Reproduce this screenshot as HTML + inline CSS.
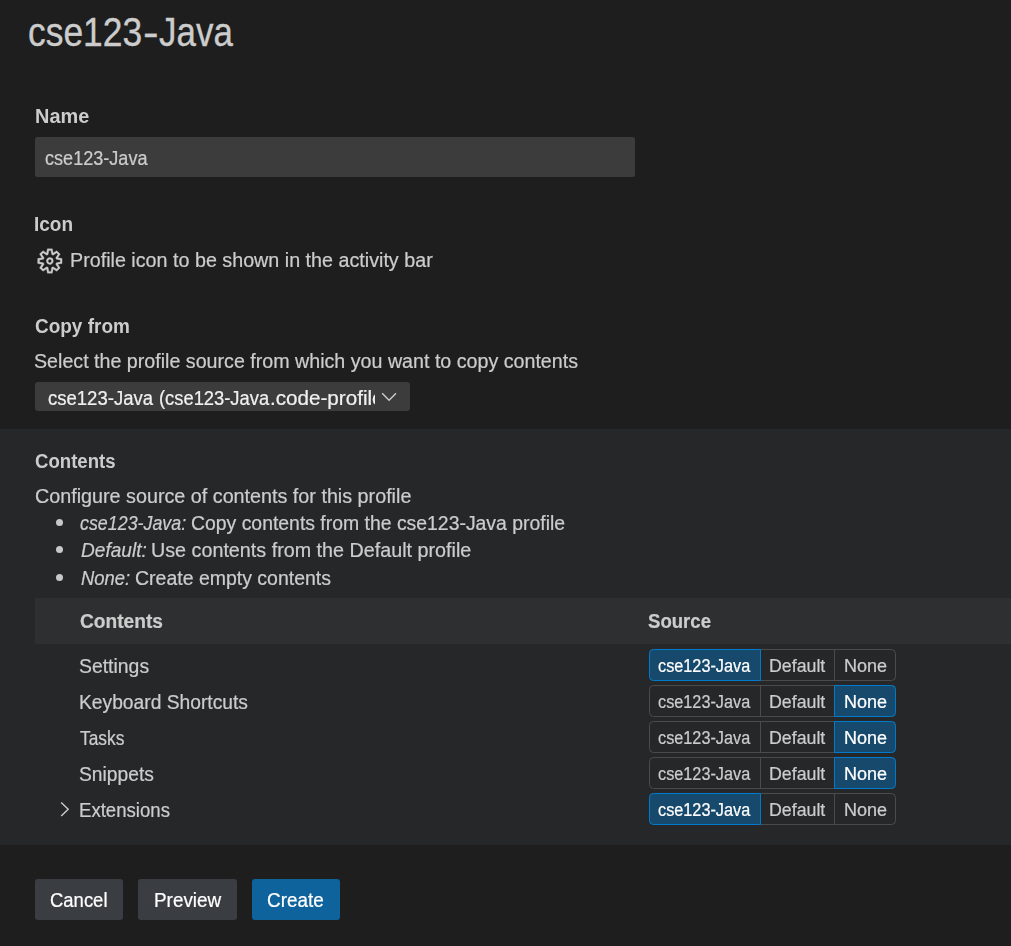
<!DOCTYPE html><html lang="en"><head><meta charset="utf-8"><title>cse123-Java</title><style>
html,body{margin:0;padding:0;background:#1e1e1e;}
body{width:1011px;height:946px;position:relative;overflow:hidden;font-family:"Liberation Sans",sans-serif;color:#cccccc;}
.b{position:absolute;}
.t{position:absolute;margin:0;white-space:nowrap;display:block;-webkit-text-stroke:0.22px currentColor;}
.s{display:inline-block;transform-origin:0 0;}
.t i{font-style:italic;}
#title{-webkit-text-stroke:0.35px currentColor;}
#lname,#licon,#lcopy,#lcont{-webkit-text-stroke:0;}
.st{display:inline-block;width:0;height:0;}
.g{position:absolute;left:0;top:0;width:1011px;height:946px;will-change:transform;}
.rg{position:absolute;left:649px;width:247px;height:32px;box-sizing:border-box;border:1px solid #4b4b4c;border-radius:4.5px;}
.rg .d{position:absolute;top:0;width:1px;height:30px;background:#4b4b4c;}
.rg .a{position:absolute;top:-1px;height:32px;box-sizing:border-box;background:#16496c;border:1px solid #007acc;}
</style></head><body>
<div class="b" style="left:35px;top:137px;width:600px;height:40px;background:#3c3c3c;border-radius:2.5px"></div>
<div class="b" style="left:35px;top:382px;width:375px;height:29px;background:#3c3c3c;border-radius:3px"></div>
<div class="b" style="left:0;top:429px;width:1011px;height:416px;background:#262729"></div>
<div class="b" style="left:35px;top:598px;width:976px;height:46px;background:#2e2f31"></div>
<div class="b" style="left:55.80px;top:518.70px;width:7.4px;height:7.4px;border-radius:50%;background:#c8c8c8"></div>
<div class="b" style="left:55.80px;top:545.80px;width:7.4px;height:7.4px;border-radius:50%;background:#c8c8c8"></div>
<div class="b" style="left:55.80px;top:573.70px;width:7.4px;height:7.4px;border-radius:50%;background:#c8c8c8"></div>
<div class="rg" style="top:649px">
<div class="d" style="left:110px"></div><div class="d" style="left:184px"></div>
<div class="a" style="left:-1px;width:112px;border-radius:4.5px 0 0 4.5px"></div>
</div>
<div class="rg" style="top:685px">
<div class="d" style="left:110px"></div><div class="d" style="left:184px"></div>
<div class="a" style="left:184px;width:62px;border-radius:0 4.5px 4.5px 0"></div>
</div>
<div class="rg" style="top:721px">
<div class="d" style="left:110px"></div><div class="d" style="left:184px"></div>
<div class="a" style="left:184px;width:62px;border-radius:0 4.5px 4.5px 0"></div>
</div>
<div class="rg" style="top:757px">
<div class="d" style="left:110px"></div><div class="d" style="left:184px"></div>
<div class="a" style="left:184px;width:62px;border-radius:0 4.5px 4.5px 0"></div>
</div>
<div class="rg" style="top:793px">
<div class="d" style="left:110px"></div><div class="d" style="left:184px"></div>
<div class="a" style="left:-1px;width:112px;border-radius:4.5px 0 0 4.5px"></div>
</div>
<div class="b" style="left:35px;top:879px;width:88px;height:41px;background:#3a3d41;border-radius:3px"></div>
<div class="b" style="left:138px;top:879px;width:99px;height:41px;background:#3a3d41;border-radius:3px"></div>
<div class="b" style="left:252px;top:879px;width:88px;height:41px;background:#0e639c;border-radius:3px"></div>
<svg class="b" style="left:0;top:0" width="1011" height="946" viewBox="0 0 1011 946">
<g transform="translate(37.65 248.80) scale(1.0167)"><path fill="#cccccc" stroke="#cccccc" stroke-width="0.3" fill-rule="evenodd" d="M19.85 8.75l4.15.83v4.84l-4.15.83 2.35 3.52-3.43 3.43-3.52-2.35-.83 4.15H9.58l-.83-4.15-3.52 2.35-3.43-3.43 2.35-3.52L0 14.42V9.58l4.15-.83L1.8 5.23 5.23 1.8l3.52 2.35L9.58 0h4.84l.83 4.15 3.52-2.35 3.43 3.43-2.35 3.52zm-1.57 5.07l4-.81v-2l-4-.81-.54-1.3 2.29-3.43-1.43-1.43-3.43 2.29-1.3-.54-.81-4h-2l-.81 4-1.3.54-3.43-2.29-1.43 1.43L6.38 8.9l-.54 1.3-4 .81v2l4 .81.54 1.3-2.29 3.43 1.43 1.43 3.43-2.29 1.3.54.81 4h2l.81-4 1.3-.54 3.43 2.29 1.43-1.43-2.29-3.43.54-1.3zm-8.186-4.672A3.43 3.43 0 0 1 12 8.57 3.44 3.44 0 0 1 15.43 12a3.43 3.43 0 1 1-5.336-2.852zm.956 4.274c.281.188.612.288.95.288A1.7 1.7 0 0 0 13.71 12a1.71 1.71 0 1 0-2.66 1.422z"/></g>
<path d="M382.2 393.3 L389.1 400.3 L396.0 393.3" fill="none" stroke="#cccccc" stroke-width="1.4"/>
<path d="M61.2 802.4 L68.2 809.2 L61.2 816" fill="none" stroke="#cccccc" stroke-width="1.4"/>
</svg>
<h1 class="t" id="title" style="left:28.00px;top:10.00px;font-size:40.20px;line-height:45px;font-weight:400;color:#cccccc"><span class="s" id="title_s0" style="transform:scaleX(0.8811)">cse123</span><span class="s" id="title_s1" style="transform:scaleX(1.1686);margin-left:-14.61px">-</span><span class="s" id="title_s2" style="transform:scaleX(0.8695);margin-left:2.61px">Java</span></h1>
<div class="g">
<span class="t" id="lname" style="left:35.00px;top:105.00px;font-size:19.50px;line-height:22px;font-weight:700;color:#cccccc"><span class="s" id="lname_s0" style="transform:scaleX(1.0217)">Name</span></span>
<span class="t" id="inp" style="left:45.00px;top:147.00px;font-size:19.60px;line-height:22px;font-weight:400;color:#cccccc"><span class="s" id="inp_s0" style="transform:scaleX(0.9229)">cse123-Java</span></span>
<span class="t" id="licon" style="left:34.00px;top:213.00px;font-size:19.50px;line-height:22px;font-weight:700;color:#cccccc"><span class="s" id="licon_s0" style="transform:scaleX(0.9736)">Icon</span></span>
<span class="t" id="picon" style="left:70.00px;top:249.00px;font-size:19.60px;line-height:22px;font-weight:400;color:#cccccc"><span class="s" id="picon_s0" style="transform:scaleX(1.0061)">Profile icon to be shown in the activity bar</span></span>
<span class="t" id="lcopy" style="left:35.00px;top:315.00px;font-size:19.50px;line-height:22px;font-weight:700;color:#cccccc"><span class="s" id="lcopy_s0" style="transform:scaleX(0.9727)">Copy from</span></span>
<span class="t" id="selp" style="left:34.00px;top:350.00px;font-size:19.60px;line-height:22px;font-weight:400;color:#cccccc"><span class="s" id="selp_s0" style="transform:scaleX(1.0030)">Select the profile source from which you want to copy contents</span></span>
<div class="b" style="left:35px;top:382px;width:340px;height:29px;overflow:hidden"><span class="t" id="selt" style="left:13.00px;top:5.00px;font-size:19.60px;line-height:22px;font-weight:400;color:#f0f0f0"><span class="s" id="selt_s0" style="transform:scaleX(0.9453)">cse123-Java</span> <span class="s" id="selt_s1" style="transform:scaleX(0.9362);margin-left:-5.58px">(cse123-Java</span><span class="s" id="selt_s2" style="transform:scaleX(1.0533);margin-left:-6.43px">.code-profile)</span></span></div>
<span class="t" id="lcont" style="left:35.00px;top:450.00px;font-size:19.50px;line-height:22px;font-weight:700;color:#cccccc"><span class="s" id="lcont_s0" style="transform:scaleX(0.9533)">Contents</span></span>
<span class="t" id="conf" style="left:35.00px;top:484.70px;font-size:19.60px;line-height:22px;font-weight:400;color:#cccccc"><span class="s" id="conf_s0" style="transform:scaleX(1.0075)">Configure source of contents for this profile</span></span>
<span class="t" id="li1" style="left:80.00px;top:511.60px;font-size:19.60px;line-height:22px;font-weight:400;color:#cccccc"><span class="s" id="li1_s0" style="transform:scaleX(0.9110)"><i>cse123-Java:</i></span> <span class="s" id="li1_s1" style="transform:scaleX(0.9898);margin-left:-11.00px">Copy contents from the cse123-Java profile</span></span>
<span class="t" id="li2" style="left:81.00px;top:539.00px;font-size:19.60px;line-height:22px;font-weight:400;color:#cccccc"><span class="s" id="li2_s0" style="transform:scaleX(0.9738)"><i>Default:</i></span> <span class="s" id="li2_s1" style="transform:scaleX(1.0071);margin-left:-3.00px">Use contents from the Default profile</span></span>
<span class="t" id="li3" style="left:81.00px;top:566.70px;font-size:19.60px;line-height:22px;font-weight:400;color:#cccccc"><span class="s" id="li3_s0" style="transform:scaleX(0.9403)"><i>None:</i></span> <span class="s" id="li3_s1" style="transform:scaleX(0.9944);margin-left:-3.75px">Create empty contents</span></span>
<span class="t" id="hcont" style="left:80.00px;top:610.00px;font-size:19.50px;line-height:22px;font-weight:700;color:#cccccc"><span class="s" id="hcont_s0" style="transform:scaleX(0.9822)">Contents</span></span>
<span class="t" id="hsrc" style="left:648.00px;top:610.00px;font-size:19.50px;line-height:22px;font-weight:700;color:#cccccc"><span class="s" id="hsrc_s0" style="transform:scaleX(0.9525)">Source</span></span>
<span class="t" id="r0" style="left:79.00px;top:655.00px;font-size:19.60px;line-height:22px;font-weight:400;color:#cccccc"><span class="s" id="r0_s0" style="transform:scaleX(0.9903)">Settings</span></span>
<span class="t" id="r0_0" style="left:658.00px;top:656.00px;font-size:17.50px;line-height:20px;font-weight:400;color:#ffffff"><span class="s" id="r0_0_s0" style="transform:scaleX(0.9293)">cse123-Java</span></span>
<span class="t" id="r0_1" style="left:769.00px;top:656.00px;font-size:17.50px;line-height:20px;font-weight:400;color:#cccccc"><span class="s" id="r0_1_s0" style="transform:scaleX(1.0155)">Default</span></span>
<span class="t" id="r0_2" style="left:844.00px;top:656.00px;font-size:17.50px;line-height:20px;font-weight:400;color:#cccccc"><span class="s" id="r0_2_s0" style="transform:scaleX(1.0307)">None</span></span>
<span class="t" id="r1" style="left:79.00px;top:691.00px;font-size:19.60px;line-height:22px;font-weight:400;color:#cccccc"><span class="s" id="r1_s0" style="transform:scaleX(0.9819)">Keyboard Shortcuts</span></span>
<span class="t" id="r1_0" style="left:658.00px;top:692.00px;font-size:17.50px;line-height:20px;font-weight:400;color:#cccccc"><span class="s" id="r1_0_s0" style="transform:scaleX(0.9293)">cse123-Java</span></span>
<span class="t" id="r1_1" style="left:769.00px;top:692.00px;font-size:17.50px;line-height:20px;font-weight:400;color:#cccccc"><span class="s" id="r1_1_s0" style="transform:scaleX(1.0155)">Default</span></span>
<span class="t" id="r1_2" style="left:844.00px;top:692.00px;font-size:17.50px;line-height:20px;font-weight:400;color:#ffffff"><span class="s" id="r1_2_s0" style="transform:scaleX(1.0288)">None</span></span>
<span class="t" id="r2" style="left:80.00px;top:727.00px;font-size:19.60px;line-height:22px;font-weight:400;color:#cccccc"><span class="s" id="r2_s0" style="transform:scaleX(0.8857)">Tasks</span></span>
<span class="t" id="r2_0" style="left:658.00px;top:728.00px;font-size:17.50px;line-height:20px;font-weight:400;color:#cccccc"><span class="s" id="r2_0_s0" style="transform:scaleX(0.9293)">cse123-Java</span></span>
<span class="t" id="r2_1" style="left:769.00px;top:728.00px;font-size:17.50px;line-height:20px;font-weight:400;color:#cccccc"><span class="s" id="r2_1_s0" style="transform:scaleX(1.0155)">Default</span></span>
<span class="t" id="r2_2" style="left:844.00px;top:728.00px;font-size:17.50px;line-height:20px;font-weight:400;color:#ffffff"><span class="s" id="r2_2_s0" style="transform:scaleX(1.0288)">None</span></span>
<span class="t" id="r3" style="left:79.00px;top:763.00px;font-size:19.60px;line-height:22px;font-weight:400;color:#cccccc"><span class="s" id="r3_s0" style="transform:scaleX(0.9818)">Snippets</span></span>
<span class="t" id="r3_0" style="left:658.00px;top:764.00px;font-size:17.50px;line-height:20px;font-weight:400;color:#cccccc"><span class="s" id="r3_0_s0" style="transform:scaleX(0.9293)">cse123-Java</span></span>
<span class="t" id="r3_1" style="left:769.00px;top:764.00px;font-size:17.50px;line-height:20px;font-weight:400;color:#cccccc"><span class="s" id="r3_1_s0" style="transform:scaleX(1.0155)">Default</span></span>
<span class="t" id="r3_2" style="left:844.00px;top:764.00px;font-size:17.50px;line-height:20px;font-weight:400;color:#ffffff"><span class="s" id="r3_2_s0" style="transform:scaleX(1.0288)">None</span></span>
<span class="t" id="r4" style="left:79.00px;top:799.00px;font-size:19.60px;line-height:22px;font-weight:400;color:#cccccc"><span class="s" id="r4_s0" style="transform:scaleX(0.9488)">Extensions</span></span>
<span class="t" id="r4_0" style="left:658.00px;top:800.00px;font-size:17.50px;line-height:20px;font-weight:400;color:#ffffff"><span class="s" id="r4_0_s0" style="transform:scaleX(0.9293)">cse123-Java</span></span>
<span class="t" id="r4_1" style="left:769.00px;top:800.00px;font-size:17.50px;line-height:20px;font-weight:400;color:#cccccc"><span class="s" id="r4_1_s0" style="transform:scaleX(1.0155)">Default</span></span>
<span class="t" id="r4_2" style="left:844.00px;top:800.00px;font-size:17.50px;line-height:20px;font-weight:400;color:#cccccc"><span class="s" id="r4_2_s0" style="transform:scaleX(1.0307)">None</span></span>
</div>
<span class="t" id="bcancel" style="left:50.00px;top:889.00px;font-size:19.60px;line-height:22px;font-weight:400;color:#ffffff"><span class="s" id="bcancel_s0" style="transform:scaleX(0.9428)">Cancel</span></span>
<span class="t" id="bprev" style="left:154.00px;top:889.00px;font-size:19.60px;line-height:22px;font-weight:400;color:#ffffff"><span class="s" id="bprev_s0" style="transform:scaleX(0.9640)">Preview</span></span>
<span class="t" id="bcreate" style="left:267.00px;top:889.00px;font-size:19.60px;line-height:22px;font-weight:400;color:#ffffff"><span class="s" id="bcreate_s0" style="transform:scaleX(0.9636)">Create</span></span>
</body></html>
